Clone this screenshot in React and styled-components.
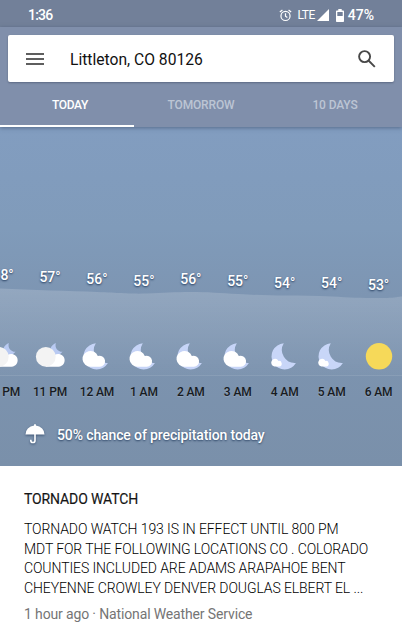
import React from "react";
import styled, { createGlobalStyle } from "styled-components";

const GlobalStyle = createGlobalStyle`
  * {
    box-sizing: border-box;
  }
  body {
    margin: 0;
    background-color: white;
    font-family: Roboto, sans-serif;
    overflow: hidden;
  }
`;

const Screen = styled.div`
  width: 402px;
  height: 639px;
  overflow: hidden;
  background-color: white;
`;

const StatusBar = styled.div`
  height: 27px;
  padding: 3px 28px 0 28px;
  display: flex;
  justify-content: space-between;
  align-items: center;
  background-color: #728099;
  color: white;
  font-size: 14px;
  font-weight: 500;
`;

const Clock = styled.span`
  letter-spacing: -0.8px;
`;

const StatusIcons = styled.div`
  display: flex;
  align-items: center;
`;

const Network = styled.span`
  margin: 0 2px 0 5px;
  font-size: 12px;
  font-weight: 400;
  letter-spacing: -0.5px;
`;

const Percent = styled.span`
  margin-left: 4px;
`;

const SHeader = styled.header`
  position: relative;
  z-index: 1;
  height: 100px;
  padding-top: 8px;
  background-color: #808fab;
  box-shadow: 0 1px 4px rgba(50, 65, 95, 0.55);
`;

const SearchBar = styled.div`
  height: 47px;
  margin: 0 8px;
  padding: 0 18px;
  display: flex;
  align-items: center;
  background-color: white;
  border-radius: 2px;
  box-shadow: 0 1px 2px rgba(40, 50, 75, 0.4);
`;

const Place = styled.span`
  flex: 1;
  margin-left: 26px;
  padding-top: 1px;
  font-size: 15.65px;
  color: #111111;
`;

const Tabs = styled.nav`
  height: 45px;
  display: grid;
  grid-template-columns: repeat(3, 1fr);
`;

const Tab = styled.div`
  display: flex;
  align-items: center;
  justify-content: center;
  padding: ${(props) => (props.$active ? "2px 0 0 6px" : "0")};
  border-bottom: ${(props) => (props.$active ? "2px solid white" : "none")};
  color: ${(props) => (props.$active ? "white" : "#bcc5d4")};
  font-size: 12px;
  letter-spacing: ${(props) => (props.$active ? "-0.3px" : "-0.15px")};
  font-weight: 500;
`;

const Forecast = styled.section`
  height: 339px;
  display: grid;
  grid-template-columns: 402px;
  grid-template-rows: 339px;
  overflow: hidden;
  background: linear-gradient(#829dc0, #809bba 30%, #7d95b2 50%, #7a90aa);
`;

const Curve = styled.svg`
  grid-area: 1 / 1;
`;

const ForecastContent = styled.div`
  grid-area: 1 / 1;
  display: flex;
  flex-direction: column;
`;

const Hours = styled.div`
  height: 276px;
  margin-left: -20.4px;
  display: grid;
  grid-template-columns: repeat(9, 46.95px);
`;

const Hour = styled.div`
  display: grid;
  grid-template-rows: 215px 34px 1fr;
  justify-items: center;
`;

const Temp = styled.span`
  padding-top: ${(props) => props.$top}px;
  font-size: 14px;
  line-height: 16px;
  font-weight: 500;
  color: white;
  text-shadow: 0 1px 2px rgba(20, 45, 80, 0.85);
`;

const Time = styled.span`
  padding-top: 8px;
  font-size: 12px;
  letter-spacing: -0.1px;
  line-height: 16px;
  font-weight: 500;
  color: #171b22;
  white-space: nowrap;
  text-shadow: 0 1px 1px rgba(255, 255, 255, 0.2);
`;

const WeatherIcon = styled.svg`
  overflow: visible;
`;

const Precipitation = styled.div`
  height: 63px;
  padding: 1px 0 0 25px;
  display: flex;
  align-items: center;
  gap: 12px;
  font-size: 14px;
  letter-spacing: -0.12px;
  font-weight: 500;
  color: white;
  text-shadow: 0 1px 2px rgba(20, 45, 80, 0.75);
`;

const Umbrella = styled.svg`
  margin-top: -3px;
  filter: drop-shadow(0 1px 1px rgba(20, 45, 80, 0.6));
`;

const Alert = styled.article`
  padding: 25px 24px 0;
`;

const AlertTitle = styled.h2`
  margin: 0 0 13px;
  font-size: 14px;
  letter-spacing: -0.12px;
  line-height: 16px;
  font-weight: 400;
  color: #151515;
  -webkit-text-stroke: 0.15px #151515;
`;

const AlertText = styled.p`
  margin: 0;
  font-size: 14px;
  letter-spacing: -0.1px;
  line-height: 19.5px;
  font-weight: 300;
  color: black;
  white-space: nowrap;
`;

const AlertSource = styled.p`
  margin: 8px 0 0;
  font-size: 14px;
  letter-spacing: -0.14px;
  line-height: 16px;
  color: #757575;
`;

const hours = [
  { temp: 58, time: "10 PM", icon: "cloudy", top: 140 },
  { temp: 57, time: "11 PM", icon: "cloudy", top: 142 },
  { temp: 56, time: "12 AM", icon: "partly", top: 144 },
  { temp: 55, time: "1 AM", icon: "partly", top: 146 },
  { temp: 56, time: "2 AM", icon: "partly", top: 144 },
  { temp: 55, time: "3 AM", icon: "partly", top: 146 },
  { temp: 54, time: "4 AM", icon: "mostlyClear", top: 148 },
  { temp: 54, time: "5 AM", icon: "mostlyClear", top: 148 },
  { temp: 53, time: "6 AM", icon: "sunny", top: 150 },
];

const alertLines = [
  "TORNADO WATCH 193 IS IN EFFECT UNTIL 800 PM",
  "MDT FOR THE FOLLOWING LOCATIONS CO . COLORADO",
  "COUNTIES INCLUDED ARE ADAMS ARAPAHOE BENT",
  "CHEYENNE CROWLEY DENVER DOUGLAS ELBERT EL ...",
];

const MOON = "M12.8 1.3 A13.1 13.1 0 1 0 24.9 21 A13 13 0 0 1 12.8 1.3 Z";

function HourIcon({ type }) {
  return (
    <WeatherIcon width="28" height="28" viewBox="0 0 28 28">
      {type === "cloudy" && (
        <>
          <path
            d="M19.8 1 C14.5 3.5 13 8 15 13 L22 14 L26.5 9.8 C22 10 18.5 6 19.8 1Z"
            fill="#b9caf2"
          />
          <path
            d="M10 24.7 V17 L17.5 14 A6.4 6.4 0 1 1 22.5 24.7 Z"
            fill="#fff"
          />
          <circle cx="9.8" cy="14.8" r="9.9" fill="#f3f3f3" />
        </>
      )}
      {type === "partly" && (
        <>
          <path d={MOON} fill="#c6d4f7" />
          <path
            d="M7.5 24.7 A7.9 7.9 0 1 1 14.8 14 A5.5 5.5 0 1 1 16.8 24.7 Z"
            fill="#fff"
          />
        </>
      )}
      {type === "mostlyClear" && (
        <>
          <path d={MOON} fill="#c8d6f8" />
          <path
            d="M3.5 24.4 A3.8 3.8 0 1 1 7.4 18.9 A2.8 2.8 0 1 1 8.3 24.6 Z"
            fill="#fff"
          />
        </>
      )}
      {type === "sunny" && <circle cx="14" cy="14.3" r="13.2" fill="#f6d959" />}
    </WeatherIcon>
  );
}

export default function App() {
  return (
    <>
      <GlobalStyle />
      <Screen>
        <StatusBar>
          <Clock>1:36</Clock>
          <StatusIcons>
            <svg
              width="13"
              height="13"
              viewBox="0 0 14 14"
              fill="none"
              stroke="white"
              strokeWidth="1.3"
            >
              <circle cx="7" cy="7.5" r="4.9" />
              <path d="M7 4.7v3l2 1.4M.9 3.3L3.7 1M13.1 3.3L10.3 1" />
            </svg>
            <Network>LTE</Network>
            <svg width="12" height="12" viewBox="0 0 12 12" fill="white">
              <path d="M12 0v12H0z" />
            </svg>
            <svg
              width="8"
              height="13"
              viewBox="0 0 8 13"
              style={{ marginLeft: 7 }}
            >
              <path
                d="M2.3 0h3.4v1.4H7.2q.8 0 .8.8v10q0 .8-.8.8H.8q-.8 0-.8-.8v-10q0-.8.8-.8h1.5z"
                fill="white"
              />
              <path d="M1.3 3h5.4v4H1.3z" fill="#728099" />
            </svg>
            <Percent>47%</Percent>
          </StatusIcons>
        </StatusBar>
        <SHeader>
          <SearchBar>
            <svg width="18" height="12" viewBox="0 0 18 12" fill="#5e5e5e">
              <path d="M0 0h18v2H0zM0 5h18v2H0zM0 10h18v2H0z" />
            </svg>
            <Place>Littleton, CO 80126</Place>
            <svg
              width="18"
              height="18"
              viewBox="0 0 18 18"
              fill="none"
              stroke="#484848"
              strokeWidth="1.9"
            >
              <circle cx="6.6" cy="6.6" r="5.5" />
              <path d="M10.5 10.5l6.3 6.3" />
            </svg>
          </SearchBar>
          <Tabs>
            <Tab $active>TODAY</Tab>
            <Tab>TOMORROW</Tab>
            <Tab>10 DAYS</Tab>
          </Tabs>
        </SHeader>
        <Forecast>
          <Curve width="402" height="339" viewBox="0 0 402 339">
            <defs>
              <linearGradient id="fade" x1="0" y1="0" x2="0" y2="1">
                <stop offset="0" stopColor="white" stopOpacity="0.17" />
                <stop offset="1" stopColor="white" stopOpacity="0.015" />
              </linearGradient>
            </defs>
            <path
              d="M0 161.5 C30 163 70 164 97 165 S130 167 147 166.5 S175 165 191 165 S220 166 238 167 S270 168.5 285 168.5 S315 168.5 332 169.5 S360 171 379 171 S395 170 402 169.5 V248 H0Z"
              fill="url(#fade)"
            />
            <path
              d="M0 248.5H402"
              stroke="white"
              strokeOpacity="0.1"
              strokeWidth="1"
            />
          </Curve>
          <ForecastContent>
            <Hours>
              {hours.map(({ temp, time, icon, top }) => (
                <Hour key={time}>
                  <Temp $top={top}>{temp}°</Temp>
                  <HourIcon type={icon} />
                  <Time>{time}</Time>
                </Hour>
              ))}
            </Hours>
            <Precipitation>
              <Umbrella width="20" height="20" viewBox="0 0 20 21">
                <path
                  d="M0 11 A10 9.3 0 0 1 9 1.5 V1 a1 1 0 0 1 2 0 v.5 A10 9.3 0 0 1 20 11Z"
                  fill="white"
                />
                <path
                  d="M10 10v7.2a2.2 2.2 0 0 1-4.4 0v-.7"
                  fill="none"
                  stroke="white"
                  strokeWidth="1.7"
                />
              </Umbrella>
              50% chance of precipitation today
            </Precipitation>
          </ForecastContent>
        </Forecast>
        <Alert>
          <AlertTitle>TORNADO WATCH</AlertTitle>
          {alertLines.map((line) => (
            <AlertText key={line}>{line}</AlertText>
          ))}
          <AlertSource>1 hour ago · National Weather Service</AlertSource>
        </Alert>
      </Screen>
    </>
  );
}
